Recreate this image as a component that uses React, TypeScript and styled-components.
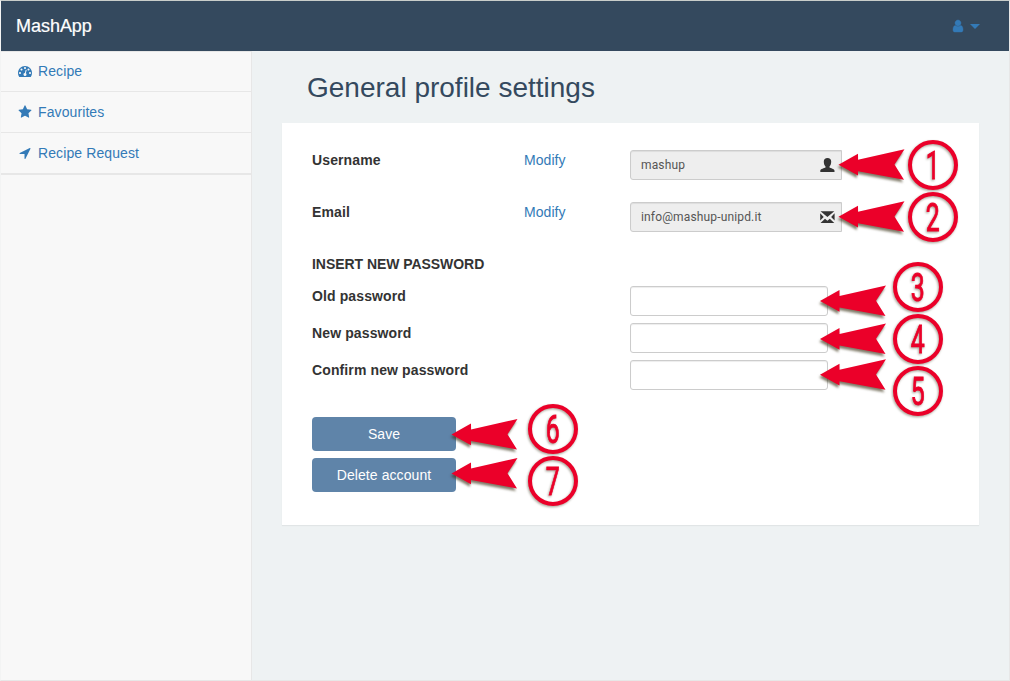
import React from "react";
import styled, { createGlobalStyle } from "styled-components";

const GlobalStyle = createGlobalStyle`
  *, *::before, *::after { box-sizing: border-box; }
  body { margin: 0; background: #f8f8f8; }
`;

const Page = styled.div`
  position: relative;
  display: flex;
  flex-direction: column;
  height: 681px;
  overflow: hidden;
  border: 1px solid #e7e7e7;
  border-top-color: #c9cdca;
  border-left-color: #f3f4f4;
  background: #eef2f3;
  color: #333;
  font: 14px/20px "Liberation Sans", Arial, sans-serif;
`;

const Navbar = styled.header`
  display: flex;
  justify-content: space-between;
  align-items: center;
  height: 50px;
  flex: none;
  padding: 0 29px 0 15px;
  background: #34495e;
`;

const Brand = styled.a`
  color: #fff;
  font-size: 18px;
  letter-spacing: -0.03px;
  -webkit-text-stroke: 0.2px #fff;
`;

const UserMenu = styled.div`
  display: flex;
  align-items: center;
  gap: 5px;
  color: #337ab7;
`;

const Caret = styled.span`
  border-top: 5px solid currentColor;
  border-left: 5px solid transparent;
  border-right: 5px solid transparent;
`;

const Body = styled.div`
  display: flex;
  flex: 1;
  min-height: 0;
`;

const Sidebar = styled.nav`
  width: 251px;
  flex: none;
  background: #f8f8f8;
  border-top: 1px solid #e7e7e7;
  border-right: 1px solid #e7e7e7;
`;

const NavList = styled.div`
  display: flex;
  flex-direction: column;
  border-bottom: 1px solid #e7e7e7;
`;

const NavItem = styled.a`
  display: flex;
  align-items: center;
  gap: 6px;
  height: 41px;
  padding: 0 17px;
  border-bottom: 1px solid #e7e7e7;
  color: #337ab7;
  letter-spacing: 0.1px;
  &:first-child { height: 40px; padding-bottom: 1px; }
`;

const Main = styled.main`
  flex: 1;
  padding: 21px 30px 0 30px;
`;

const Title = styled.h1`
  margin: 0 0 20px;
  padding-left: 25px;
  color: #34495e;
  font-size: 28px;
  font-weight: 400;
  line-height: 31px;
`;

const Card = styled.section`
  height: 402px;
  padding: 27px 30px;
  background: #fff;
  box-shadow: 0 1px 1px rgba(0, 0, 0, 0.05);
`;

const Row = styled.div<{ $height: number }>`
  display: grid;
  grid-template-columns: 212px 106px 212px;
  align-items: start;
  height: ${(p) => p.$height}px;
`;

const Label = styled.label`
  font-weight: 700;
  letter-spacing: 0.12px;
`;

const Heading = styled.div`
  height: 32px;
  font-weight: 700;
  letter-spacing: -0.05px;
`;

const Link = styled.a`
  color: #337ab7;
  letter-spacing: 0.05px;
`;

const Readonly = styled.div`
  display: flex;
  align-items: center;
  justify-content: space-between;
  height: 30px;
  padding: 0 6px 0 10px;
  border: 1px solid #ccc;
  border-radius: 3px 0 0 3px;
  background: #eee;
  box-shadow: inset 0 1px 1px rgba(0, 0, 0, 0.075);
  color: #555;
  font: 12px/18px Roboto, sans-serif;
  letter-spacing: 0.15px;
`;

const Field = styled.input`
  grid-column: 3;
  width: 198px;
  height: 30px;
  border: 1px solid #ccc;
  border-radius: 3px;
  background: #fff;
  box-shadow: inset 0 1px 1px rgba(0, 0, 0, 0.075);
`;

const Actions = styled.div`
  display: flex;
  flex-direction: column;
  gap: 7px;
  width: 144px;
  padding-top: 20px;
`;

const Button = styled.button`
  height: 34px;
  border: 0;
  border-radius: 4px;
  background: #5f84a9;
  color: #fff;
  font: 14px/20px "Liberation Sans", Arial, sans-serif;
  letter-spacing: 0.08px;
`;

const Annotations = styled.svg`
  position: absolute;
  left: -1px;
  top: -1px;
  pointer-events: none;
`;

const paths = {
  dashboard:
    "M384 1152q0-53-37.5-90.5t-90.5-37.5-90.5 37.5-37.5 90.5 37.5 90.5 90.5 37.5 90.5-37.5 37.5-90.5zm192-448q0-53-37.5-90.5t-90.5-37.5-90.5 37.5-37.5 90.5 37.5 90.5 90.5 37.5 90.5-37.5 37.5-90.5zm428 481l101-382q6-26-7.5-48.5t-38.5-29.5-48 6.5-30 39.5l-101 382q-60 5-107 43.5t-63 98.5q-20 77 20 146t117 89 146-20 89-117q16-60-6-117t-72-91zm660-33q0-53-37.5-90.5t-90.5-37.5-90.5 37.5-37.5 90.5 37.5 90.5 90.5 37.5 90.5-37.5 37.5-90.5zm-640-640q0-53-37.5-90.5t-90.5-37.5-90.5 37.5-37.5 90.5 37.5 90.5 90.5 37.5 90.5-37.5 37.5-90.5zm448 192q0-53-37.5-90.5t-90.5-37.5-90.5 37.5-37.5 90.5 37.5 90.5 90.5 37.5 90.5-37.5 37.5-90.5zm320 448q0 261-141 483-19 29-54 29h-1402q-35 0-54-29-141-221-141-483 0-182 71-348t191-286 286-191 348-71 348 71 286 191 191 286 71 348z",
  star: "M1728 647q0 22-26 48l-363 354 86 500q1 7 1 20 0 21-10.5 35.5t-30.5 14.5q-19 0-40-12l-449-236-449 236q-22 12-40 12-21 0-31.5-14.5t-10.5-35.5q0-6 2-20l86-500-364-354q-25-27-25-48 0-37 56-46l502-73 225-455q19-41 49-41t49 41l225 455 502 73q56 9 56 46z",
  arrow:
    "M1593 349l-640 1280q-17 35-57 35-5 0-15-2-22-5-35.5-22.5t-13.5-39.5v-576h-576q-22 0-39.5-13.5t-22.5-35.5 4-42 29-30l1280-640q13-7 29-7 27 0 45 19 15 14 18.5 34.5t-6.5 39.5z",
  user: "M1536 1399q0 109-62.5 187t-150.5 78h-854q-88 0-150.5-78t-62.5-187q0-85 8.5-160.5t31.5-152 58.5-131 94-89 134.5-34.5q131 128 313 128t313-128q76 0 134.5 34.5t94 89 58.5 131 31.5 152 8.5 160.5zm-256-887q0 159-112.5 271.5t-271.5 112.5-271.5-112.5-112.5-271.5 112.5-271.5 271.5-112.5 271.5 112.5 112.5 271.5z",
};

const Icon = ({ name, weight = 0 }: { name: keyof typeof paths; weight?: number }) => (
  <svg width="14" height="14" viewBox="0 0 1792 1792" fill="currentColor" stroke="currentColor" strokeWidth={weight}>
    <path d={paths[name]} />
  </svg>
);

const PersonGlyph = () => (
  <svg width="16" height="16" viewBox="0 0 16 16" fill="#333">
    <path d="M8.500 1C6.200 1 4.800 2.400 4.800 4.500C4.800 6.700 5.400 8.500 6.500 9.400V10.500C5.500 11.400 1.300 11.600 1.300 13.800V15H15.500V13.800C15.500 11.600 11.500 11.400 10.500 10.500V9.400C11.600 8.500 12.200 6.700 12.200 4.500C12.200 2.400 10.800 1 8.500 1Z" />
  </svg>
);

const MailGlyph = () => (
  <svg width="16" height="16" viewBox="0 0 16 16" fill="#333">
    <path d="M1.500 2.200H15.300L8.400 8ZM1.200 4.300L4.700 7.900L1.200 11.600ZM15.600 4.300L12.100 7.900L15.600 11.600ZM1.500 14L6 9.700L8.400 11.700L10.800 9.700L15.300 14Z" />
  </svg>
);

const marks = [
  { n: 1, arrow: [838.5, 164.7], circle: [933, 165] },
  { n: 2, arrow: [838.5, 216.7], circle: [933, 217] },
  { n: 3, arrow: [820, 301], circle: [918, 287] },
  { n: 4, arrow: [820, 339], circle: [918, 339] },
  { n: 5, arrow: [820, 374.7], circle: [918, 391] },
  { n: 6, arrow: [451.5, 434.5], circle: [553, 429] },
  { n: 7, arrow: [451.5, 473.5], circle: [553, 481] },
];

const Callouts = () => (
  <Annotations width="1010" height="681" viewBox="0 0 1010 681">
    <defs>
      <filter id="arrowShadow" x="-20%" y="-20%" width="140%" height="160%" colorInterpolationFilters="sRGB">
        <feDropShadow dx="-1" dy="2.500" stdDeviation="1.200" floodColor="#3c3418" floodOpacity="0.65" />
      </filter>
      <filter id="ringShadow" x="-20%" y="-20%" width="140%" height="140%" colorInterpolationFilters="sRGB">
        <feDropShadow dx="-0.800" dy="1.200" stdDeviation="0.800" floodColor="#3c3418" floodOpacity="0.45" />
      </filter>
    </defs>
    {marks.map(({ n, arrow, circle }) => (
      <g key={n} fill="#eb0029">
        <path
          transform={`translate(${arrow[0]} ${arrow[1]})`}
          filter="url(#arrowShadow)"
          d="M0 0L19.500 -11V-5L66 -15.500L56 -0.300L65.500 15L19.500 6.500V10.800Z"
        />
        <g transform={`translate(${circle[0]} ${circle[1]})`} filter="url(#ringShadow)">
          <circle r="23" fill="none" stroke="#eb0029" strokeWidth="4" />
          <text
            transform="translate(-0.300 14.200) scale(0.630 1)"
            textAnchor="middle"
            fontFamily="Roboto, sans-serif"
            fontSize="39.500"
            stroke="#eb0029"
            strokeWidth="0.900"
          >
            {n}
          </text>
        </g>
      </g>
    ))}
  </Annotations>
);

export default function App() {
  return (
    <Page>
      <GlobalStyle />
      <Navbar>
        <Brand>MashApp</Brand>
        <UserMenu>
          <Icon name="user" weight={50} />
          <Caret />
        </UserMenu>
      </Navbar>
      <Body>
        <Sidebar>
          <NavList>
            <NavItem><Icon name="dashboard" />Recipe</NavItem>
            <NavItem><Icon name="star" />Favourites</NavItem>
            <NavItem><Icon name="arrow" />Recipe Request</NavItem>
          </NavList>
        </Sidebar>
        <Main>
          <Title>General profile settings</Title>
          <Card>
            <Row $height={52}>
              <Label>Username</Label>
              <Link>Modify</Link>
              <Readonly>mashup<PersonGlyph /></Readonly>
            </Row>
            <Row $height={52}>
              <Label>Email</Label>
              <Link>Modify</Link>
              <Readonly>info@mashup-unipd.it<MailGlyph /></Readonly>
            </Row>
            <Heading>INSERT NEW PASSWORD</Heading>
            <Row $height={37}>
              <Label>Old password</Label>
              <Field type="password" />
            </Row>
            <Row $height={37}>
              <Label>New password</Label>
              <Field type="password" />
            </Row>
            <Row $height={37}>
              <Label>Confirm new password</Label>
              <Field type="password" />
            </Row>
            <Actions>
              <Button>Save</Button>
              <Button>Delete account</Button>
            </Actions>
          </Card>
        </Main>
      </Body>
      <Callouts />
    </Page>
  );
}
